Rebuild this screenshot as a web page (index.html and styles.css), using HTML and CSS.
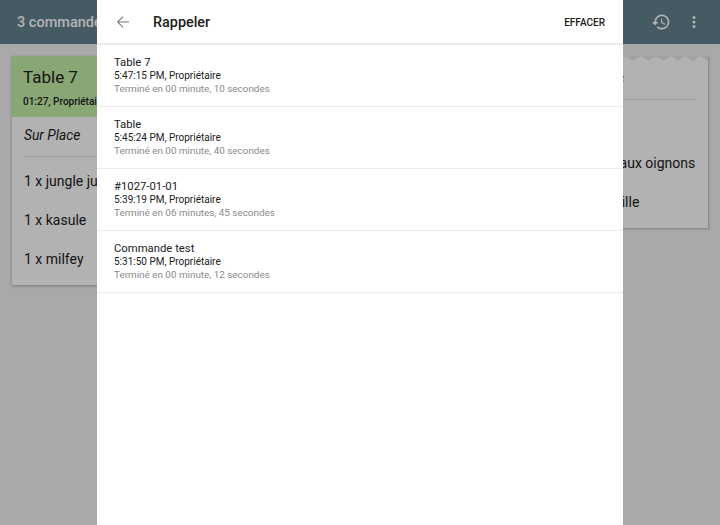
FILE: index.html
```html
<!DOCTYPE html>
<html lang="fr">
<head>
    <meta charset="UTF-8">
    <meta name="viewport" content="width=device-width, initial-scale=1.0">
    <title>Rappeler</title>
    <link rel="stylesheet" href="styles.css">
</head>
<body>

<div class="screen">
    <header class="appbar">
        <span class="appbar-title">3 commandes</span>
        <div class="appbar-actions">
            <svg class="icon" viewBox="0 0 24 24" width="20" height="20"><path d="M13 3a9 9 0 0 0-9 9H1l3.9 3.9.1.1L9 12H6a7 7 0 1 1 2.05 4.95L6.64 18.36A9 9 0 1 0 13 3zm-1 5v5l4.25 2.52.77-1.28-3.52-2.09V8z"/></svg>
            <svg class="icon" viewBox="0 0 24 24" width="18" height="18"><path d="M12 8a2 2 0 1 0 0-4 2 2 0 0 0 0 4zm0 2a2 2 0 1 0 0 4 2 2 0 0 0 0-4zm0 6a2 2 0 1 0 0 4 2 2 0 0 0 0-4z"/></svg>
        </div>
    </header>

    <main class="board">
        <section class="ticket">
            <div class="ticket-head">
                <div class="ticket-name">Table 7</div>
                <div class="ticket-meta">01:27, Propriétaire</div>
            </div>
            <div class="ticket-type">Sur Place</div>
            <div class="ticket-lines">
                <div class="ticket-line">1 x jungle juice</div>
                <div class="ticket-line">1 x kasule</div>
                <div class="ticket-line">1 x milfey</div>
            </div>
        </section>

        <section class="ticket ticket-hidden"></section>

        <section class="ticket ticket-torn">
            <svg class="tear" viewBox="0 0 225 5" width="224" height="5" preserveAspectRatio="none"><path d="M0 0v5l7.500-5 7.500 5 7.500-5 7.500 5 7.500-5 7.500 5 7.500-5 7.500 5 7.500-5 7.500 5 7.500-5 7.500 5 7.500-5 7.500 5 7.500-5 7.500 5 7.500-5 7.500 5 7.500-5 7.500 5 7.500-5 7.500 5 7.500-5 7.500 5 7.500-5 7.500 5 7.500-5 7.500 5 7.500-5 7.500 5V0z"/></svg>
            <div class="ticket-type ticket-type-torn">Livraisons sur retraits</div>
            <div class="ticket-lines ticket-lines-torn">
                <div class="ticket-line">1 x thé</div>
                <div class="ticket-line">1 x burger spéciale aux oignons</div>
                <div class="ticket-line">1 x mousse à la vanille</div>
            </div>
        </section>
    </main>

    <div class="scrim"></div>

    <aside class="panel">
        <div class="panel-bar">
            <svg class="back" viewBox="0 0 24 24" width="18" height="18"><path d="M20 11.300H6.500l6-6-1-1L4 12l7.500 7.700 1-1-6-6H20z"/></svg>
            <h1 class="panel-title">Rappeler</h1>
            <button class="panel-clear">EFFACER</button>
        </div>
        <ul class="recall-list">
            <li class="recall-item">
                <div class="recall-name">Table 7</div>
                <div class="recall-time">5:47:15 PM, Propriétaire</div>
                <div class="recall-done">Terminé en 00 minute, 10 secondes</div>
            </li>
            <li class="recall-item">
                <div class="recall-name">Table</div>
                <div class="recall-time">5:45:24 PM, Propriétaire</div>
                <div class="recall-done">Terminé en 00 minute, 40 secondes</div>
            </li>
            <li class="recall-item">
                <div class="recall-name">#1027-01-01</div>
                <div class="recall-time">5:39:19 PM, Propriétaire</div>
                <div class="recall-done">Terminé en 06 minutes, 45 secondes</div>
            </li>
            <li class="recall-item">
                <div class="recall-name">Commande test</div>
                <div class="recall-time">5:31:50 PM, Propriétaire</div>
                <div class="recall-done">Terminé en 00 minute, 12 secondes</div>
            </li>
        </ul>
    </aside>
</div>

</body>
</html>
```

FILE: styles.css
```css
:root {
    --appbar-color: #63818f;
    --board-color: #f2f2f2;
    --ticket-color: #ffffff;
    --green-color: #c5f0a8;
    --text-color: #212121;
    --muted-color: #8a8a8a;
    --line-color: #ececec;
}

* {
    box-sizing: border-box;
}

html, body {
    margin: 0;
    height: 100%;
}

body {
    font-family: Roboto, Arial, sans-serif;
    color: var(--text-color);
    overflow: hidden;
}

.screen {
    position: relative;
    width: 720px;
    height: 525px;
    background-color: var(--board-color);
    overflow: hidden;
}

.appbar {
    height: 44px;
    display: flex;
    align-items: center;
    justify-content: space-between;
    padding: 0 17px;
    background-color: var(--appbar-color);
    color: #fff;
}

.appbar-title {
    font-size: 14.500px;
    font-weight: 500;
}

.appbar-actions {
    display: flex;
    align-items: center;
    gap: 14px;
}

.icon {
    fill: #fff;
}

.board {
    display: grid;
    grid-template-columns: repeat(3, 224px);
    gap: 12px;
    padding: 12px;
    align-items: start;
}

.ticket {
    background-color: var(--ticket-color);
    box-shadow: 0 1px 3px rgba(0, 0, 0, 0.3);
}

.ticket-hidden {
    height: 100px;
}

.ticket-torn {
    box-shadow: 1px 1px 2px rgba(0, 0, 0, 0.25);
}

.tear {
    display: block;
    fill: #e8e8e8;
}

.ticket-head {
    height: 61px;
    padding: 9px 11px 0;
    background-color: var(--green-color);
}

.ticket-name {
    font-size: 17px;
    line-height: 24px;
}

.ticket-meta {
    margin-top: 6px;
    font-size: 10px;
    line-height: 14px;
    font-weight: 500;
    white-space: nowrap;
}

.ticket-type {
    margin: 0 12px;
    padding-top: 8px;
    height: 40px;
    font-size: 13.800px;
    line-height: 20px;
    font-style: italic;
    white-space: nowrap;
    border-bottom: 1px solid #dcdcdc;
}

.ticket-type-torn {
    padding-top: 7px;
    height: 39px;
}

.ticket-lines {
    display: flex;
    flex-direction: column;
    gap: 19px;
    padding: 14px 12px 16px;
}

.ticket-lines-torn {
    padding-left: 15px;
}

.ticket-line {
    font-size: 14px;
    line-height: 20px;
    white-space: nowrap;
}

.scrim {
    position: absolute;
    inset: 0;
    background-color: rgba(0, 0, 0, 0.3);
}

.panel {
    position: absolute;
    top: 0;
    bottom: 0;
    left: 97px;
    width: 526px;
    background-color: #fff;
}

.panel-bar {
    height: 45px;
    display: flex;
    align-items: center;
    padding: 1px 18px 0 17px;
    border-bottom: 2px solid var(--line-color);
}

.back {
    fill: #757575;
}

.panel-title {
    margin: 0 0 0 21px;
    flex: 1;
    font-size: 14.400px;
    font-weight: 500;
    color: var(--text-color);
}

.panel-clear {
    padding: 0;
    border: none;
    background: none;
    font-family: inherit;
    font-size: 10px;
    font-weight: 500;
    color: var(--text-color);
}

.recall-list {
    margin: 0;
    padding: 0;
    list-style: none;
}

.recall-item {
    height: 62px;
    padding: 11px 17px 0;
    border-bottom: 1px solid var(--line-color);
}

.recall-name {
    font-size: 11.300px;
    line-height: 13px;
}

.recall-time {
    font-size: 10px;
    line-height: 13px;
}

.recall-done {
    font-size: 9.900px;
    line-height: 13px;
    color: var(--muted-color);
}
```
